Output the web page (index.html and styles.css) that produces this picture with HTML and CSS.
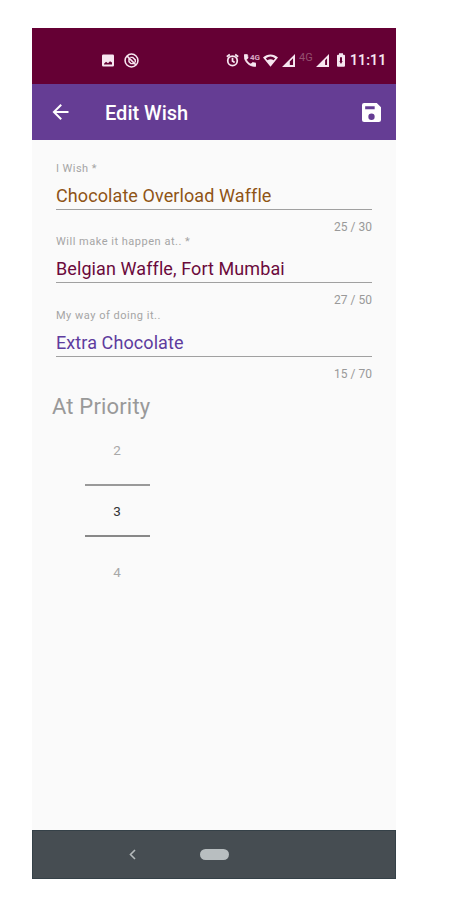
FILE: index.html
```html
<!DOCTYPE html>
<html lang="en">
<head>
<meta charset="utf-8">
<title>Edit Wish</title>
<link rel="stylesheet" href="styles.css">
</head>
<body>
<main class="phone">
  <div class="status">
    <svg class="i-image" viewBox="3 3 18 18"><path fill="currentColor" fill-rule="evenodd" d="M5 3h14a2 2 0 0 1 2 2v14a2 2 0 0 1-2 2H5a2 2 0 0 1-2-2V5a2 2 0 0 1 2-2zm1 15h12v-3l-3-2-3 3-3-2-3 3z"/></svg>
    <svg class="i-round" viewBox="0 0 24 24" fill="none" stroke="currentColor" stroke-width="2.5"><circle cx="12" cy="12" r="10.3"/><path d="M5 5l14 14M8 8v6l3 3h5M10 7h4l4 4v4" stroke-width="2.3"/></svg>
    <svg class="i-alarm" viewBox="0 0 24 24" fill="none" stroke="currentColor" stroke-width="3.2"><circle cx="12" cy="13.5" r="8.8"/><path d="M1.5 6L7 1.8M22.5 6L17 1.8M12 8v6l4 2.5"/></svg>
    <span class="call">
      <svg viewBox="3 3 18 18"><path fill="currentColor" stroke="currentColor" d="M6.6 10.8c1.4 2.8 3.8 5.1 6.6 6.6l2.2-2.2c.3-.3.7-.4 1-.2 1.1.4 2.3.6 3.6.6.6 0 1 .4 1 1V20c0 .6-.4 1-1 1C10.600 21 3 13.400 3 4c0-.6.4-1 1-1h3.500c.6 0 1 .4 1 1 0 1.200.2 2.400.6 3.600.1.300 0 .700-.2 1z"/></svg>
      <span class="call-net">4G</span>
    </span>
    <svg class="i-wifi" viewBox="0 0 24 20"><path fill="currentColor" fill-rule="evenodd" d="M0 5C7-1.300 17-1.300 24 5L12 20zM4.500 6.500L7 9.500Q12 6.500 17 9.500L19.500 6.500Q12 1 4.500 6.500z"/></svg>
    <svg class="i-signal one" viewBox="0 0 20 20"><path fill="currentColor" fill-rule="evenodd" d="M0 20L20 0V20zM12 11.500V17H17V6.500z"/></svg>
    <span class="net">4G</span>
    <svg class="i-signal two" viewBox="0 0 20 20"><path fill="currentColor" fill-rule="evenodd" d="M0 20L20 0V20zM14 9.500V17H17V6.500z"/></svg>
    <svg class="i-battery" viewBox="0 0 12 20"><path fill="currentColor" fill-rule="evenodd" d="M3 0h6v2h1.500Q12 2 12 3.500v15Q12 20 10.500 20h-9Q0 20 0 18.500v-15Q0 2 1.500 2H3zM4.500 6v5.500h-1L6 16l2.500-4.500h-1V6z"/></svg>
    <span class="clock">11:11</span>
  </div>
  <header class="bar">
    <svg class="back" viewBox="4 4 16 16"><path fill="currentColor" d="M20 11H7.830l5.590-5.590L12 4l-8 8 8 8 1.410-1.410L7.830 13H20z"/></svg>
    <h1>Edit Wish</h1>
    <svg class="save" viewBox="3 3 18 18"><path fill="currentColor" fill-rule="evenodd" d="M17 3H5a2 2 0 0 0-2 2v14a2 2 0 0 0 2 2h14a2 2 0 0 0 2-2V7zm-5 16a3 3 0 1 1 0-6 3 3 0 0 1 0 6zm3-10H6V6h9z"/></svg>
  </header>
  <section class="form">
    <div class="field">
      <label>I Wish *</label>
      <div class="value brown">Chocolate Overload Waffle</div>
      <div class="count">25 / 30</div>
    </div>
    <div class="field">
      <label class="wide">Will make it happen at.. *</label>
      <div class="value wine">Belgian Waffle, Fort Mumbai</div>
      <div class="count">27 / 50</div>
    </div>
    <div class="field">
      <label class="wide">My way of doing it..</label>
      <div class="value violet">Extra Chocolate</div>
      <div class="count">15 / 70</div>
    </div>
    <h2>At Priority</h2>
    <div class="picker">
      <span>2</span>
      <span class="current">3</span>
      <span>4</span>
    </div>
  </section>
  <nav class="nav">
    <svg class="nav-back" viewBox="0 0 7 11"><path d="M6 1L1.500 5.500L6 10" fill="none" stroke="currentColor" stroke-width="1.600"/></svg>
    <span class="home"></span>
  </nav>
</main>
</body>
</html>
```
FILE: styles.css
```css
* { box-sizing: border-box; }
body {
  margin: 0;
  height: 900px;
  padding: 28px 0 0 32px;
  background: #fff;
  font-family: Roboto, sans-serif;
  overflow: hidden;
}
svg { display: block; flex: none; }
.phone {
  display: flex;
  flex-direction: column;
  width: 364px;
  height: 851px;
  background: #fafafa;
}
.status {
  display: flex;
  align-items: center;
  height: 56px;
  padding: 8px 0 0 70px;
  background: #650034;
  color: #f7e6f0;
}
.i-image { width: 12px; height: 13px; }
.i-round { width: 15px; height: 15px; margin-left: 10px; }
.i-alarm { width: 13px; height: 14px; margin-left: 87px; }
.call { display: flex; width: 15px; margin-left: 5px; }
.call svg { width: 12px; height: 13px; }
.call-net { margin-left: -6px; font-size: 8px; line-height: 7px; font-weight: 700; color: #d9a9c3; }
.i-wifi { width: 15px; height: 13px; margin-left: 4px; }
.i-signal { width: 13px; height: 13px; }
.one { margin-left: 4px; }
.two { margin-left: 3px; }
.net { width: 14px; margin-left: 4px; font-size: 11px; line-height: 10px; margin-top: -4px; color: #94506f; }
.i-battery { width: 8px; height: 14px; margin-left: 8px; }
.clock { margin-left: 5px; font-size: 14px; font-weight: 600; letter-spacing: 0.1px; }
.bar {
  display: flex;
  align-items: center;
  height: 56px;
  padding: 0 15px 0 20px;
  background: #653d94;
  color: #fff;
}
.back { width: 17px; height: 16px; }
h1 { margin: 2px 0 0 36px; font-size: 20px; font-weight: 500; line-height: 24px; }
.save { width: 19px; height: 19px; margin: 1px 0 0 auto; }
.form { flex: 1; padding: 20.500px 24px 0; }
.field { height: 73.500px; }
label { display: block; height: 20px; font-size: 11px; line-height: 15px; letter-spacing: 0.450px; color: #a5a5a5; }
.wide { letter-spacing: 0.510px; }
.value {
  height: 29px;
  border-bottom: 1.500px solid #a0a0a0;
  font-size: 18px;
  line-height: 30px;
  letter-spacing: 0.090px;
  white-space: nowrap;
}
.brown { color: #8f5416; }
.wine { color: #6b0a3c; }
.violet { color: #5e3c9e; }
.count { margin-top: 9px; text-align: right; font-size: 12px; line-height: 16px; color: #999; }
h2 { margin: 11px 0 0 -4px; font-size: 22px; font-weight: 400; line-height: 30px; letter-spacing: 0.170px; color: #999; }
.picker {
  display: flex;
  flex-direction: column;
  width: 65px;
  margin: 8px 0 0 29px;
  text-align: center;
  font-size: 13.500px;
  color: #a8a8a8;
}
.picker span { height: 54px; line-height: 41px; padding-right: 1px; }
.picker .current {
  height: 53px;
  line-height: 50px;
  border-top: 2px solid #999;
  border-bottom: 2px solid #888;
  color: #333;
}
.picker span:last-child { line-height: 70px; }
.nav {
  display: flex;
  align-items: center;
  height: 49px;
  padding-left: 96px;
  background: #464d52;
  border: 1px solid #354148;
  color: #b5babc;
}
.nav-back { width: 7px; height: 11px; }
.home { width: 29px; height: 11px; margin-left: 64px; border-radius: 6px; background: #b8bec0; }
```
